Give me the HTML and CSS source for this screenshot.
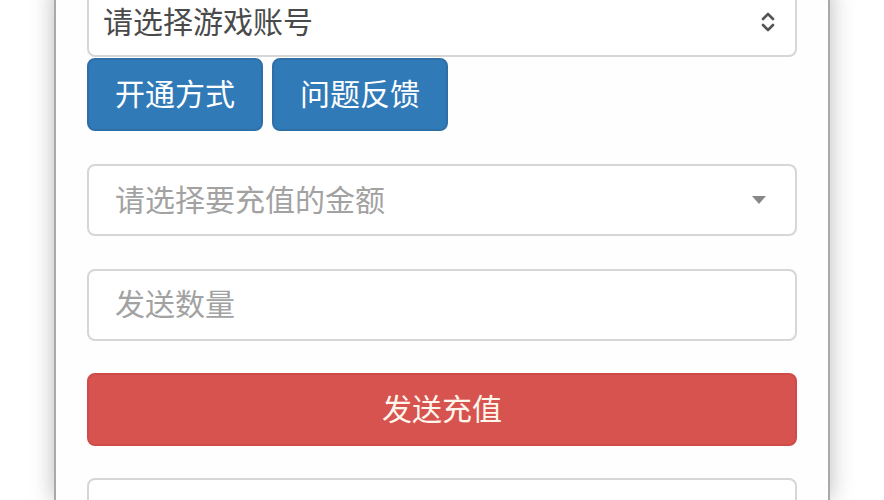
FILE: index.html
```html
<!DOCTYPE html>
<html lang="zh-CN">
<head>
<meta charset="utf-8">
<title>充值</title>
<link rel="stylesheet" href="styles.css">
</head>
<body>
<div class="page">
  <main class="panel">
    <div class="field select account">
      <span class="value">请选择游戏账号</span>
      <svg class="updown" width="14" height="22" viewBox="0 0 14 22" aria-hidden="true">
        <path d="M2 8 L7 3 L12 8" fill="none" stroke="#555" stroke-width="2.6" stroke-linecap="round" stroke-linejoin="round"/>
        <path d="M2 14 L7 19 L12 14" fill="none" stroke="#555" stroke-width="2.6" stroke-linecap="round" stroke-linejoin="round"/>
      </svg>
    </div>
    <div class="btn-row">
      <button class="btn btn-primary">开通方式</button>
      <button class="btn btn-primary">问题反馈</button>
    </div>
    <div class="field select amount">
      <span class="placeholder">请选择要充值的金额</span>
      <svg class="caret" width="16" height="8" viewBox="0 0 16 8" aria-hidden="true">
        <path d="M1 0 L15 0 L8 8 Z" fill="#888"/>
      </svg>
    </div>
    <div class="field">
      <span class="placeholder">发送数量</span>
    </div>
    <button class="btn btn-danger btn-block">发送充值</button>
    <div class="field"></div>
  </main>
</div>
</body>
</html>
```
FILE: styles.css
```css
html, body {
  margin: 0;
  padding: 0;
  background: #ffffff;
  height: 100%;
  overflow: hidden;
}
body {
  font-family: "Noto Sans CJK SC", "Noto Sans", sans-serif;
}
.page {
  display: flex;
  padding-left: 54px;
  height: 100%;
}
.panel {
  width: 776px;
  box-sizing: border-box;
  background: #fefefe;
  border-left: 2px solid #a9a9a9;
  border-right: 2px solid #a9a9a9;
  box-shadow: 0 0 22px rgba(0, 0, 0, 0.28);
  padding: 0 31px;
  margin-top: -13px;
  display: flex;
  flex-direction: column;
}
.field {
  height: 72px;
  box-sizing: border-box;
  border: 2px solid #d6d6d6;
  border-radius: 8px;
  background: #fff;
  display: flex;
  align-items: center;
  padding: 0 24px 0 26px;
  font-size: 30px;
  line-height: 1;
  color: #555;
  flex-shrink: 0;
  margin-bottom: 32.5px;
}
.field > span {
  padding-bottom: 5px;
}
.field.account {
  height: 70px;
  padding: 0 20px 0 14px;
  margin-bottom: 1px;
}
.select {
  justify-content: space-between;
}
.placeholder {
  color: #a2a2a2;
}
.value {
  color: #4a4a4a;
}
.caret {
  margin-right: 4px;
}
.btn-row {
  display: flex;
  gap: 9px;
  margin-bottom: 33px;
}
.btn {
  font-family: inherit;
  font-size: 30px;
  line-height: 1;
  height: 73px;
  border: 2px solid transparent;
  border-radius: 8px;
  color: #fff;
  padding: 0 26px 5px;
  cursor: pointer;
  flex-shrink: 0;
}
.btn-primary {
  background: #317ab8;
  border-color: #2e6fa8;
}
.btn-danger {
  background: #d75350;
  border-color: #cf4b48;
  color: #fff6ec;
}
.btn-block {
  width: 100%;
  margin-bottom: 32px;
}
```
